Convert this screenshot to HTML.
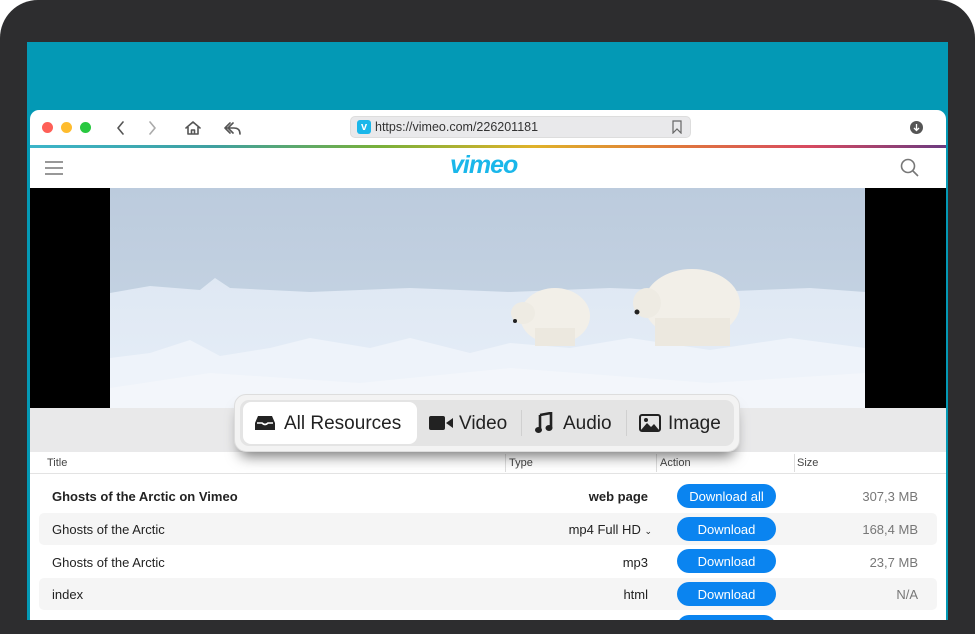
<!DOCTYPE html>
<html><head><meta charset="utf-8"><style>
*{margin:0;padding:0;box-sizing:border-box}
body{width:975px;height:634px;overflow:hidden;background:#fff;font-family:"Liberation Sans",Arial,sans-serif;position:relative}
.abs{position:absolute}
.frame{left:0;top:0;width:975px;height:634px;background:#2d2d2f;border-radius:38px 38px 0 0}
.screen{left:27px;top:42px;width:921px;height:578px;background:#0399b5;overflow:hidden}
.win{left:30px;top:110px;width:916px;height:510px;background:#fff;border-radius:9px 9px 0 0;overflow:hidden}
.t{position:absolute;font-size:13px;color:#222;white-space:nowrap}
.btn{position:absolute;left:677px;width:99px;height:24px;border-radius:12px;background:#0a84f0;color:#fff;font-size:13px;text-align:center;line-height:25px}
.grow{position:absolute;left:39px;width:898px;height:32px;background:#f5f5f5;border-radius:5px}
.sz{position:absolute;right:55px;font-size:13px;color:#777;text-align:right}
</style></head><body>
<div class="abs frame"></div>
<div class="abs screen"></div>
<div class="abs win">
 <div class="abs" style="left:12px;top:12px;width:11px;height:11px;border-radius:50%;background:#fe5f57"></div>
 <div class="abs" style="left:31px;top:12px;width:11px;height:11px;border-radius:50%;background:#febc2e"></div>
 <div class="abs" style="left:50px;top:12px;width:11px;height:11px;border-radius:50%;background:#28c840"></div>
 <svg class="abs" style="left:84px;top:9px" width="130" height="18" fill="none" stroke="#555" stroke-width="1.6" stroke-linecap="round" stroke-linejoin="round">
  <path d="M9 3 L4 9 L9 15"/>
  <path d="M36 3 L41 9 L36 15" stroke="#aaa"/>
  <path d="M72 9 L79 3 L86 9 M74 8 V15 H84 V8 M77.5 15 V11 H80.5 V15"/>
  <path d="M116 4 L111 9 L116 14 M113 9 H120 Q126 9 126 15 M119 4 L114 9 L119 14"/>
 </svg>
 <div class="abs" style="left:320px;top:6px;width:341px;height:22px;background:#e9e9eb;border-radius:5px;border:1px solid #ddd"></div>
 <div class="abs" style="left:327px;top:10px;width:14px;height:14px;background:#1ab7ea;border-radius:3px;color:#fff;font-size:11px;font-weight:bold;text-align:center;line-height:14px">v</div>
 <div class="t" style="left:345px;top:10px;font-size:12.5px;color:#333">https://vimeo.com/226201181</div>
 <svg class="abs" style="left:642px;top:10px" width="10" height="14" fill="none" stroke="#666" stroke-width="1.2"><path d="M1 1 H9 V13 L5 9 L1 13 Z"/></svg>
 <div class="abs" style="left:880px;top:11px;width:13px;height:13px;border-radius:50%;background:#555"></div>
 <svg class="abs" style="left:880px;top:11px" width="13" height="13" fill="none" stroke="#fff" stroke-width="1.3"><path d="M6.5 3 V9.5 M4 7 L6.5 9.5 L9 7"/></svg>
 <div class="abs" style="left:0;top:35px;width:916px;height:3px;background:linear-gradient(90deg,#3cb5c9,#3fa0a0 20%,#78b03a 38%,#e0b22a 55%,#e07a3a 70%,#d84a60 85%,#6a3a80)"></div>
 <svg class="abs" style="left:14px;top:50px" width="20" height="16" stroke="#777" stroke-width="1.6"><path d="M1 2 H19 M1 8 H19 M1 14 H19"/></svg>
 <div class="t" style="left:420px;top:41px;font-size:25px;font-weight:bold;font-style:italic;color:#1ab7ea;font-family:'Liberation Sans',sans-serif;letter-spacing:-1px">vimeo</div>
 <svg class="abs" style="left:870px;top:48px" width="20" height="20" fill="none" stroke="#777" stroke-width="1.6"><circle cx="8" cy="8" r="6.5"/><path d="M13 13 L18 18"/></svg>
 <div class="abs" style="left:0;top:78px;width:916px;height:220px;background:#000"></div>
 <svg class="abs" style="left:80px;top:78px" width="755" height="220">
  <defs><linearGradient id="sky" x1="0" y1="0" x2="0" y2="1"><stop offset="0" stop-color="#bccbdd"/><stop offset="1" stop-color="#cad8e6"/></linearGradient>
  <linearGradient id="snow" x1="0" y1="0" x2="0" y2="1"><stop offset="0" stop-color="#dfe8f3"/><stop offset="1" stop-color="#e6eef8"/></linearGradient></defs>
  <rect width="755" height="220" fill="url(#sky)"/>
  <path d="M0 105 L40 98 L90 102 L105 90 L120 100 L200 104 L300 100 L400 104 L500 100 L600 104 L700 100 L755 104 V220 H0Z" fill="url(#snow)"/>
  <path d="M0 170 L40 165 L80 152 L110 168 L160 160 L200 150 L260 160 L300 150 L360 165 L400 155 L460 160 L520 150 L600 162 L680 150 L755 160 V220 H0Z" fill="#eef3fa"/>
  <path d="M0 200 L100 185 L250 195 L400 180 L600 195 L755 185 V220 H0Z" fill="#f3f6fb"/>
  <ellipse cx="445" cy="128" rx="35" ry="28" fill="#f2efe8"/>
  <ellipse cx="413" cy="125" rx="12" ry="11" fill="#eeebe3"/>
  <rect x="425" y="140" width="40" height="18" fill="#ece8df"/>
  <ellipse cx="582" cy="116" rx="48" ry="35" fill="#f2efe8"/>
  <ellipse cx="537" cy="115" rx="14" ry="15" fill="#eeebe3"/>
  <rect x="545" y="130" width="75" height="28" fill="#ece8df"/>
  <circle cx="405" cy="133" r="2" fill="#222"/><circle cx="527" cy="124" r="2.5" fill="#222"/>
 </svg>
 <div class="abs" style="left:0;top:298px;width:916px;height:44px;background:#e9e9ea"></div>
 <div class="abs" style="left:0;top:342px;width:916px;height:22px;background:#fff;border-bottom:1px solid #e3e3e3"></div>
 <div class="t" style="left:17px;top:347px;font-size:11px;color:#444">Title</div>
 <div class="abs" style="left:475px;top:344px;width:1px;height:18px;background:#ddd"></div>
 <div class="t" style="left:479px;top:347px;font-size:11px;color:#444">Type</div>
 <div class="abs" style="left:626px;top:344px;width:1px;height:18px;background:#ddd"></div>
 <div class="t" style="left:630px;top:347px;font-size:11px;color:#444">Action</div>
 <div class="abs" style="left:764px;top:344px;width:1px;height:18px;background:#ddd"></div>
 <div class="t" style="left:767px;top:347px;font-size:11px;color:#444">Size</div>
 <div class="grow" style="top:403px;left:9px"></div>
 <div class="grow" style="top:468px;left:9px"></div>
 <div class="t" style="left:22px;top:379px;font-weight:bold">Ghosts of the Arctic on Vimeo</div>
 <div class="t" style="left:22px;top:412px">Ghosts of the Arctic</div>
 <div class="t" style="left:22px;top:445px">Ghosts of the Arctic</div>
 <div class="t" style="left:22px;top:477px">index</div>
 <div class="t" style="right:298px;top:379px;font-weight:bold">web page</div>
 <div class="t" style="right:294px;top:412px">mp4 Full HD <span style="font-size:9px">&#8964;</span></div>
 <div class="t" style="right:298px;top:445px">mp3</div>
 <div class="t" style="right:298px;top:477px">html</div>
 <div class="btn" style="left:647px;top:374px">Download all</div>
 <div class="btn" style="left:647px;top:407px">Download</div>
 <div class="btn" style="left:647px;top:439px">Download</div>
 <div class="btn" style="left:647px;top:472px">Download</div>
 <div class="btn" style="left:647px;top:505px"></div>
 <div class="sz" style="right:28px;top:379px">307,3 MB</div>
 <div class="sz" style="right:28px;top:412px">168,4 MB</div>
 <div class="sz" style="right:28px;top:445px">23,7 MB</div>
 <div class="sz" style="right:28px;top:477px">N/A</div>
</div>
<div class="abs" style="left:234px;top:394px;width:506px;height:58px;background:#f3f3f3;border-radius:12px;border:1px solid #ddd;box-shadow:0 10px 14px -6px rgba(0,0,0,0.55)"></div>
<div class="abs" style="left:240px;top:400px;width:494px;height:46px;background:#e4e4e4;border-radius:9px"></div>
<div class="abs" style="left:243px;top:402px;width:174px;height:42px;background:#fff;border-radius:8px"></div>
<div class="abs" style="left:521px;top:410px;width:1px;height:26px;background:#d0d0d0"></div>
<div class="abs" style="left:626px;top:410px;width:1px;height:26px;background:#d0d0d0"></div>
<svg class="abs" style="left:254px;top:414px" width="22" height="18"><path d="M4 2 H18 L21 9 V16 H1 V9 Z" fill="#222"/><path d="M3 9 H8 Q11 12 14 9 H19" fill="none" stroke="#fff" stroke-width="1.6"/></svg>
<div class="t" style="left:284px;top:413px;font-size:19px;color:#222">All Resources</div>
<svg class="abs" style="left:429px;top:415px" width="25" height="16"><rect x="0" y="1" width="16" height="14" rx="2" fill="#222"/><path d="M17 8 L24 3 V13 Z" fill="#222"/></svg>
<div class="t" style="left:459px;top:413px;font-size:19px;color:#222">Video</div>
<svg class="abs" style="left:535px;top:412px" width="18" height="22"><path d="M5 3 L16 1 V16" fill="none" stroke="#222" stroke-width="2.6"/><path d="M5 3 V18" stroke="#222" stroke-width="2.6"/><ellipse cx="3.5" cy="18" rx="3.5" ry="3" fill="#222"/><ellipse cx="14" cy="16" rx="3.5" ry="3" fill="#222"/></svg>
<div class="t" style="left:563px;top:413px;font-size:19px;color:#222">Audio</div>
<svg class="abs" style="left:639px;top:414px" width="22" height="18"><rect x="1" y="1" width="20" height="16" rx="2" fill="none" stroke="#222" stroke-width="2"/><path d="M2 16 L8 9 L12 13 L15 10 L20 16 Z" fill="#222"/><circle cx="7" cy="6" r="2" fill="#222"/></svg>
<div class="t" style="left:668px;top:413px;font-size:19px;color:#222">Image</div>
</body></html>
